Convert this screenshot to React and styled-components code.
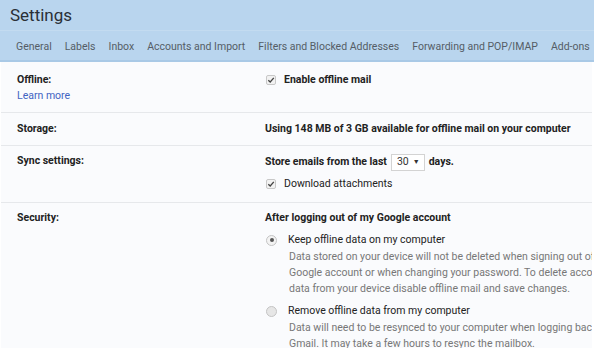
import React from "react";
import styled, { createGlobalStyle } from "styled-components";

const Global = createGlobalStyle`
  html, body { margin: 0; padding: 0; background: #ffffff; }
  body { font-family: Roboto, "Liberation Sans", Arial, sans-serif; color: #222; }
  * { box-sizing: border-box; }
`;

const Page = styled.div`
  width: 594px;
  height: 361px;
  overflow: hidden;
  background: #fff;
`;

const Header = styled.div`
  background: #b9d5ee;
  border-bottom: 2px solid #a9c9e6;
`;

const Title = styled.div`
  font-size: 17px;
  color: #2a2f36;
  padding: 4px 0 0 10px;
  height: 31px;
  line-height: 22px;
  border-bottom: 1px solid #c3dbf0;
`;

const Tabs = styled.nav`
  display: flex;
  gap: 13px;
  padding: 1px 0 0 16px;
  height: 29px;
  align-items: center;
  white-space: nowrap;
  overflow: hidden;
`;

const Tab = styled.span`
  font-size: 10.5px;
  color: #555d66;
`;

const Panel = styled.div`
  margin: 0 2px 0 1px;
  padding-top: 2px;
  background: #fafbfd;
  height: 286px;
  overflow: hidden;
`;

const Row = styled.div`
  display: grid;
  grid-template-columns: 248px 1fr;
  padding: ${(p) => p.$pt ?? 8}px 0 ${(p) => p.$pb ?? 8}px 16px;
  border-top: ${(p) => (p.$first ? "none" : "1px solid #e6e8eb")};
`;

const Label = styled.div`
  display: flex;
  flex-direction: column;
  font-size: 10.5px;
  font-weight: 700;
  line-height: 16px;
  color: #222;
`;

const LinkText = styled.a`
  font-weight: 400;
  color: #4263c2;
  text-decoration: none;
`;

const Col = styled.div`
  display: flex;
  flex-direction: column;
  font-size: 10.5px;
  line-height: 16px;
  white-space: nowrap;
`;

const Line = styled.div`
  display: flex;
  align-items: center;
  font-weight: ${(p) => (p.$bold ? 700 : 400)};
  color: ${(p) => (p.$muted ? "#777" : "#222")};
  height: ${(p) => p.$h || 16}px;
  margin-top: ${(p) => p.$mt || 0}px;
  padding-left: ${(p) => p.$indent || 0}px;
`;

const Check = styled.span`
  width: 10px;
  height: 10px;
  border: 1px solid #c8c8c8;
  border-radius: 2px;
  background: #f2f2f2;
  margin: 0 8px 0 1px;
  display: inline-flex;
  align-items: center;
  justify-content: center;
  flex: none;
`;

const Radio = styled.span`
  width: 11px;
  height: 11px;
  border-radius: 50%;
  border: 1px solid #c4c4c4;
  background: ${(p) => (p.$on ? "#f3f3f3" : "#e6e6e6")};
  display: inline-flex;
  align-items: center;
  justify-content: center;
  margin: 0 11px 0 1px;
  flex: none;
  &::after {
    content: "";
    width: 4px;
    height: 4px;
    border-radius: 50%;
    background: ${(p) => (p.$on ? "#555" : "transparent")};
  }
`;

const Select = styled.span`
  display: inline-flex;
  align-items: center;
  gap: 4px;
  height: 17px;
  padding: 0 4px 0 5px;
  margin: 0 4px 0 4px;
  border: 1px solid #d3d3d3;
  background: #fff;
  font-weight: 400;
  color: #333;
  font-size: 10.5px;
`;

const Caret = styled.span`
  font-size: 7px;
  color: #333;
`;

const CheckMark = () => (
  <svg width="8" height="8" viewBox="0 0 8 8">
    <path d="M1.3 4.2 L3.2 6 L6.8 1.8" fill="none" stroke="#444" strokeWidth="1.3" />
  </svg>
);

const tabs = [
  "General",
  "Labels",
  "Inbox",
  "Accounts and Import",
  "Filters and Blocked Addresses",
  "Forwarding and POP/IMAP",
  "Add-ons",
];

export default function App() {
  return (
    <Page>
      <Global />
      <Header>
        <Title>Settings</Title>
        <Tabs>
          {tabs.map((t) => (
            <Tab key={t}>{t}</Tab>
          ))}
        </Tabs>
      </Header>
      <Panel>
        <Row $first $pt={8} $pb={8}>
          <Label>
            <span>Offline:</span>
            <LinkText href="#">Learn more</LinkText>
          </Label>
          <Col>
            <Line $bold>
              <Check>
                <CheckMark />
              </Check>
              Enable offline mail
            </Line>
          </Col>
        </Row>
        <Row $pt={8} $pb={8}>
          <Label>Storage:</Label>
          <Col>
            <Line $bold>Using 148 MB of 3 GB available for offline mail on your computer</Line>
          </Col>
        </Row>
        <Row $pt={7} $pb={10}>
          <Label>Sync settings:</Label>
          <Col>
            <Line $bold $h={18}>
              Store emails from the last
              <Select>
                30 <Caret>▼</Caret>
              </Select>
              days.
            </Line>
            <Line $mt={5}>
              <Check>
                <CheckMark />
              </Check>
              Download attachments
            </Line>
          </Col>
        </Row>
        <Row $pt={7} $pb={8}>
          <Label>Security:</Label>
          <Col>
            <Line $bold>After logging out of my Google account</Line>
            <Line $mt={6}>
              <Radio $on />
              Keep offline data on my computer
            </Line>
            <Line $muted $indent={24} $mt={1}>
              Data stored on your device will not be deleted when signing out of your
            </Line>
            <Line $muted $indent={24}>
              Google account or when changing your password. To delete account
            </Line>
            <Line $muted $indent={24}>
              data from your device disable offline mail and save changes.
            </Line>
            <Line $mt={6}>
              <Radio />
              Remove offline data from my computer
            </Line>
            <Line $muted $indent={24} $mt={1}>
              Data will need to be resynced to your computer when logging back into
            </Line>
            <Line $muted $indent={24}>
              Gmail. It may take a few hours to resync the mailbox.
            </Line>
          </Col>
        </Row>
      </Panel>
    </Page>
  );
}
